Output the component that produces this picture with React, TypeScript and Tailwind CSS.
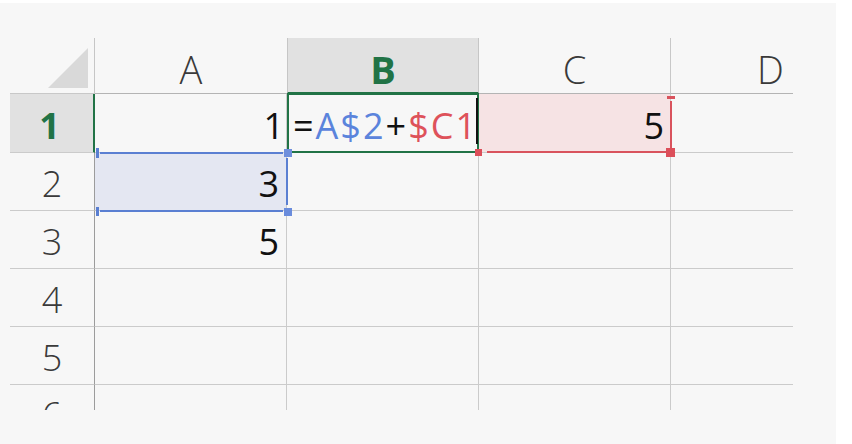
const line = "border-[#cbcbcb]";

function Num({ v, className = "" }: { v: string; className?: string }) {
  return (
    <span className={`text-[36px] leading-none ${className}`}>{v}</span>
  );
}

export default function App() {
  return (
    <div className="h-[444px] w-[852px] overflow-hidden bg-white pt-[3px] font-['Open_Sans',sans-serif]">
      <div className="h-[441px] w-[836px] bg-[#f7f7f7] pl-[10px] pt-[35px]">
        <div className="grid w-[783px] grid-cols-[85px_192px_192px_192px_122px] grid-rows-[56px_59px_58px_58px_58px_58px_25px]">
          {/* header row */}
          <div className="relative border-r border-b border-r-[#c6c6c6] border-b-[#c8c8c8]">
            <svg className="absolute left-[38px] top-[10px] h-10 w-10" viewBox="0 0 40 40">
              <polygon points="40,0 40,40 0,40" fill="#d9d9d9" />
            </svg>
          </div>
          <div className="flex items-center justify-center border-b border-[#b4b4b4] pt-[7px] text-[38px] font-light leading-none text-[#3a3a3a]">
            A
          </div>
          <div className="flex items-center justify-center border-x border-b-2 border-x-[#c6c6c6] border-b-[#217346] bg-[#e1e1e1] pt-[7px] text-[38px] font-bold leading-none text-[#217346]">
            B
          </div>
          <div className="flex items-center justify-center border-r border-b border-r-[#c8c8c8] border-b-[#b4b4b4] pt-[7px] text-[38px] font-light leading-none text-[#3a3a3a]">
            C
          </div>
          <div className="flex items-center justify-start overflow-visible whitespace-nowrap border-b border-[#b4b4b4] pl-[86px] pt-[7px] text-[38px] font-light leading-none text-[#3a3a3a]">
            D
          </div>

          {/* row 1 */}
          <div className={`flex items-center justify-center border-r-2 border-b border-r-[#217346] bg-[#e1e1e1] pt-[5px] pr-[4px] ${line}`}>
            <Num v="1" className="font-bold text-[#217346]" />
          </div>
          <div className={`flex items-center justify-end border-r border-b pr-[2px] pt-[5px] ${line}`}>
            <Num v="1" className="text-[#111]" />
          </div>
          <div className={`relative flex items-center border-r border-b pl-[6px] pt-[5px] ${line}`}>
            <span className="text-[36px] leading-none tracking-[2px]">
              <span className="text-[#111]">=</span>
              <span className="text-[#5b84dc]">A$2</span>
              <span className="text-[#111]">+</span>
              <span className="text-[#de525a]">$C1</span>
            </span>
            <div className="absolute -top-px -right-px -bottom-px left-0 border-2 border-[#217346]" />
            <div className="absolute top-[4px] right-0 h-[46px] w-[2px] bg-[#111]" />
          </div>
          <div className={`relative flex items-center justify-end border-r border-b bg-[#f6e3e4] pr-[6px] pt-[5px] ${line}`}>
            <Num v="5" className="text-[#111]" />
            <div className="absolute right-[3px] -bottom-px left-[8px] h-[2px] bg-[#d9535d]" />
            <div className="absolute top-[7px] -right-[2px] bottom-[3px] w-[2px] bg-[#d9535d]" />
            <div className="absolute top-[2px] -right-[5px] z-10 h-[3px] w-[8px] bg-[#d9535d]" />
            <div className="absolute -right-[5px] -bottom-[5px] z-10 h-[9px] w-[9px] bg-[#dc4f5a]" />
            <div className="absolute -bottom-[4px] -left-[4px] z-10 h-[7px] w-[7px] bg-[#dc4f5a]" />
          </div>
          <div className={`border-b ${line}`} />

          {/* row 2 */}
          <div className={`flex items-center justify-center border-r border-b border-r-[#9c9c9c] pt-[5px] ${line}`}>
            <Num v="2" className="font-light text-[#3a3a3a]" />
          </div>
          <div className={`relative flex items-center justify-end border-r border-b bg-[#e4e7f2] pr-[7px] pt-[5px] ${line}`}>
            <Num v="3" className="text-[#111]" />
            <div className="absolute -top-px right-[3px] left-[5px] h-[2px] bg-[#5a7fd2]" />
            <div className="absolute right-[3px] -bottom-[2px] left-[5px] h-[2px] bg-[#5a7fd2]" />
            <div className="absolute top-[5px] -right-[2px] bottom-[5px] w-[2px] bg-[#5a7fd2]" />
            <div className="absolute -top-[5px] left-px z-10 h-[10px] w-[3px] bg-[#5a7fd2]" />
            <div className="absolute -bottom-[6px] left-px z-10 h-[9px] w-[3px] bg-[#5a7fd2]" />
            <div className="absolute -top-[4px] -right-[6px] z-10 h-[8px] w-[8px] bg-[#6f8fdc]" />
            <div className="absolute -right-[6px] -bottom-[6px] z-10 h-[8px] w-[8px] bg-[#6a8cdc]" />
          </div>
          <div className={`border-r border-b ${line}`} />
          <div className={`border-r border-b ${line}`} />
          <div className={`border-b ${line}`} />

          {/* row 3 */}
          <div className={`flex items-center justify-center border-r border-b border-r-[#9c9c9c] pt-[5px] ${line}`}>
            <Num v="3" className="font-light text-[#3a3a3a]" />
          </div>
          <div className={`flex items-center justify-end border-r border-b pr-[7px] pt-[5px] ${line}`}>
            <Num v="5" className="text-[#111]" />
          </div>
          <div className={`border-r border-b ${line}`} />
          <div className={`border-r border-b ${line}`} />
          <div className={`border-b ${line}`} />

          {/* row 4 */}
          <div className={`flex items-center justify-center border-r border-b border-r-[#9c9c9c] pt-[5px] ${line}`}>
            <Num v="4" className="font-light text-[#3a3a3a]" />
          </div>
          <div className={`border-r border-b ${line}`} />
          <div className={`border-r border-b ${line}`} />
          <div className={`border-r border-b ${line}`} />
          <div className={`border-b ${line}`} />

          {/* row 5 */}
          <div className={`flex items-center justify-center border-r border-b border-r-[#9c9c9c] pt-[5px] ${line}`}>
            <Num v="5" className="font-light text-[#3a3a3a]" />
          </div>
          <div className={`border-r border-b ${line}`} />
          <div className={`border-r border-b ${line}`} />
          <div className={`border-r border-b ${line}`} />
          <div className={`border-b ${line}`} />

          {/* row 6, cut off */}
          <div className="flex justify-center overflow-hidden border-r border-[#9c9c9c] pt-[12px]">
            <Num v="6" className="font-light text-[#3a3a3a]" />
          </div>
          <div className={`border-r ${line}`} />
          <div className={`border-r ${line}`} />
          <div className={`border-r ${line}`} />
          <div />
        </div>
      </div>
    </div>
  );
}
